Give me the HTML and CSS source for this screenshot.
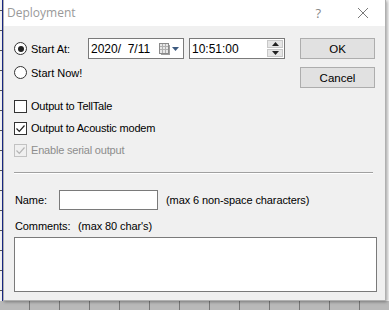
FILE: index.html
```html
<!DOCTYPE html>
<html>
<head>
<meta charset="utf-8">
<link rel="stylesheet" href="styles.css">
</head>
<body>
<div class="desk">
  <div class="window">
    <div class="titlebar">
      <span class="title">Deployment</span>
      <span class="help">?</span>
      <svg class="close" width="12" height="12" viewBox="0 0 12 12"><path d="M1 1L11 11M11 1L1 11" stroke="#7a7a7a" stroke-width="1" fill="none"/></svg>
    </div>
    <div class="client">
      <div class="top">
        <div class="left">
          <div class="row">
            <span class="radio checked"></span>
            <span class="lbl startat">Start At:</span>
            <div class="field date">
              <span class="ftext">2020/&nbsp; 7/11</span>
              <svg class="cal" width="22" height="14" viewBox="0 0 22 14">
                <rect x="1.5" y="1.5" width="9" height="10" fill="#e8e8e8" stroke="#8a8a8a"/>
                <path d="M4.5 2v9M7.5 2v9M2 4.5h8M2 7.5h8" stroke="#b0b0b0" stroke-width="1"/>
                <path d="M3 12.5h9M11.5 3v10" stroke="#a0a0a0" stroke-width="1"/>
                <path d="M14 5h7l-3.5 4z" fill="#3d5a80"/>
              </svg>
            </div>
            <div class="field time">
              <span class="ftext">10:51:00</span>
              <div class="spin">
                <div class="sbtn"><svg width="7" height="4" viewBox="0 0 7 4"><path d="M0 4h7L3.5 0z" fill="#222"/></svg></div>
                <div class="sbtn"><svg width="7" height="4" viewBox="0 0 7 4"><path d="M0 0h7L3.5 4z" fill="#222"/></svg></div>
              </div>
            </div>
          </div>
          <div class="row row2">
            <span class="radio"></span>
            <span class="lbl">Start Now!</span>
          </div>
        </div>
        <div class="right">
          <div class="btn">OK</div>
          <div class="btn">Cancel</div>
        </div>
      </div>
      <div class="checks">
        <div class="crow"><span class="cbox"></span><span class="lbl">Output to TellTale</span></div>
        <div class="crow"><span class="cbox"><svg width="11" height="11" viewBox="0 0 11 11"><path d="M1.5 5.5l2.8 2.8L9.5 2.5" stroke="#222" stroke-width="1.2" fill="none"/></svg></span><span class="lbl">Output to Acoustic modem</span></div>
        <div class="crow disabled"><span class="cbox"><svg width="11" height="11" viewBox="0 0 11 11"><path d="M1.5 5.5l2.8 2.8L9.5 2.5" stroke="#b5b5b5" stroke-width="1.2" fill="none"/></svg></span><span class="lbl">Enable serial output</span></div>
      </div>
      <div class="sep"></div>
      <div class="namerow">
        <span class="lbl namelbl">Name:</span>
        <div class="field name"></div>
        <span class="lbl">(max 6 non-space characters)</span>
      </div>
      <div class="commrow">
        <span class="lbl commlbl">Comments:</span>
        <span class="lbl">(max 80 char's)</span>
      </div>
      <div class="textarea"></div>
    </div>
  </div>
</div>
</body>
</html>
```
FILE: styles.css
```css
html, body {
  margin: 0;
  padding: 0;
}
body {
  width: 389px;
  height: 310px;
  overflow: hidden;
  background: #ececec;
  font-family: "Liberation Sans", Arial, sans-serif;
  font-size: 11px;
  color: #000;
}
.desk {
  width: 389px;
  height: 310px;
  background:
    linear-gradient(to right, transparent 2px, #1b2a8a 2px, #1b2a8a 3px, transparent 3px),
    repeating-linear-gradient(to bottom, transparent 0, transparent 10px, #555 10px, #555 11px, transparent 11px, transparent 20px),
    #f2f2f2;
  background-size: 3px 310px, 3px 310px, 100% 100%;
  background-repeat: no-repeat;
  position: relative;
}
.desk::after {
  content: "";
  position: absolute;
  left: 0;
  right: 0;
  top: 301px;
  height: 9px;
  background:
    repeating-linear-gradient(to right, #b9b9b9 0, #b9b9b9 29px, #777 29px, #777 30px);
}
.window {
  position: absolute;
  left: 3px;
  top: 0;
  width: 381px;
  height: 300px;
  border: 1px solid #b0b0b0;
  border-top: none;
  background: #f0f0f0;
  box-shadow: 1px 1px 3px rgba(0,0,0,0.35);
  z-index: 1;
}
.titlebar {
  height: 26px;
  background: #fff;
  display: flex;
  align-items: center;
  font-family: "Open Sans", "Noto Sans", sans-serif;
  font-size: 12px;
  color: #999;
}
.title {
  margin-left: 3px;
  margin-top: -1px;
}
.help {
  margin-left: auto;
  margin-right: 36px;
  font-size: 13px;
  color: #888;
}
.close {
  margin-right: 16px;
}
.client {
  padding: 12px 10px 0 10px;
  font-size: 11px;
}
.top {
  display: flex;
  height: 50px;
}
.left {
  display: flex;
  flex-direction: column;
}
.row {
  display: flex;
  align-items: center;
  height: 21px;
}
.row2 {
  margin-top: 3px;
}
.radio {
  width: 11px;
  height: 11px;
  border: 1px solid #333;
  border-radius: 50%;
  background: #fff;
  position: relative;
  flex: none;
}
.radio.checked::after {
  content: "";
  position: absolute;
  left: 2.5px;
  top: 2.5px;
  width: 6px;
  height: 6px;
  border-radius: 50%;
  background: #222;
}
.lbl {
  white-space: nowrap;
  letter-spacing: -0.1px;
}
.row .lbl {
  margin-left: 4px;
  letter-spacing: 0;
}
.startat {
  width: 57px;
}
.field {
  box-sizing: border-box;
  border: 1px solid #7a7a7a;
  background: #fff;
  height: 21px;
  display: flex;
  align-items: center;
}
.ftext {
  margin-left: 2px;
  font-size: 12px;
}
.date {
  width: 96px;
}
.cal {
  margin-left: auto;
  margin-right: 3px;
}
.time {
  width: 96px;
  margin-left: 5px;
}
.spin {
  margin-left: auto;
  margin-right: 1px;
  display: flex;
  flex-direction: column;
  gap: 1px;
}
.sbtn {
  width: 16px;
  height: 8px;
  background: #e6e6e6;
  border: 1px solid #c8c8c8;
  box-sizing: border-box;
  display: flex;
  align-items: center;
  justify-content: center;
}
.right {
  margin-left: auto;
  display: flex;
  flex-direction: column;
  gap: 8px;
}
.btn {
  box-sizing: border-box;
  width: 75px;
  height: 21px;
  background: #e1e1e1;
  border: 1px solid #adadad;
  display: flex;
  align-items: center;
  justify-content: center;
  font-size: 11.5px;
}
.checks {
  margin-top: 7px;
  display: flex;
  flex-direction: column;
}
.crow {
  display: flex;
  align-items: center;
  height: 22px;
}
.crow .lbl {
  letter-spacing: -0.2px;
}
.cbox {
  box-sizing: border-box;
  width: 13px;
  height: 13px;
  border: 1px solid #333;
  background: #fff;
  flex: none;
  display: flex;
  align-items: center;
  justify-content: center;
}
.crow .lbl {
  margin-left: 4px;
}
.disabled {
  color: #8d8d8d;
}
.disabled .cbox {
  border-color: #c2c2c2;
  background: #f0f0f0;
}
.sep {
  margin-top: 11px;
  width: 359px;
  height: 1px;
  background: #a0a0a0;
  border-bottom: 1px solid #fff;
}
.namerow {
  margin-top: 16px;
  display: flex;
  align-items: center;
  height: 20px;
}
.namelbl {
  width: 44px;
  margin-left: 1px;
}
.name {
  width: 99px;
  height: 20px;
  margin-right: 8px;
}
.commrow {
  margin-top: 9px;
  display: flex;
  height: 14px;
  align-items: center;
}
.commlbl {
  width: 63px;
  margin-left: 1px;
}
.textarea {
  margin-top: 4px;
  box-sizing: border-box;
  width: 363px;
  height: 55px;
  border: 1px solid #7a7a7a;
  background: #fff;
}
```
